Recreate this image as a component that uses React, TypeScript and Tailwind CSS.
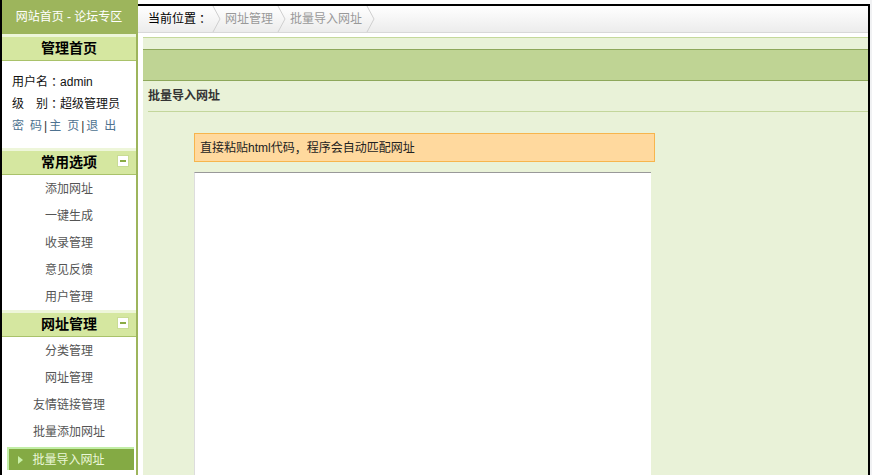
import React from 'react';

const font = { fontFamily: '"Liberation Sans", "Noto Sans CJK SC", sans-serif' };
// full-width punctuation that sits centred in its cell
const colonFont = { fontFamily: '"Noto Sans CJK JP", sans-serif' };

const commonItems = ['添加网址', '一键生成', '收录管理', '意见反馈', '用户管理'];
const urlItems = ['分类管理', '网址管理', '友情链接管理', '批量添加网址', '批量导入网址'];

function Colon() {
  return <span className="leading-none" style={colonFont}>：</span>;
}

function SectionHeader({ title }: { title: string }) {
  return (
    <div className="relative h-[27px] shrink-0 border-t-[3px] border-t-[#eef6da] border-b border-b-[#a9c26a] bg-[#d5e7a0] flex items-center justify-center">
      <span className="text-[14px] font-bold text-black">{title}</span>
    </div>
  );
}

function CollapseHeader({ title }: { title: string }) {
  return (
    <div className="relative h-[27px] shrink-0 border-t-[3px] border-t-[#eef6da] border-b border-b-[#a9c26a] bg-[#d5e7a0] flex items-center justify-center">
      <span className="text-[14px] font-bold text-black">{title}</span>
      {/* collapse toggle */}
      <span className="absolute right-[7px] top-[4px] w-[12px] h-[12px] bg-white border border-[#c9dc95] flex items-center justify-center">
        <span className="block w-[6px] h-[2px] bg-[#8aab45]" />
      </span>
    </div>
  );
}

function NavItem({ label, active }: { label: string; active?: boolean }) {
  if (active) {
    return (
      <div className="h-[27px] shrink-0 pl-[5px] pr-[2px] py-[2px]">
        <div className="relative h-full bg-[#84aa44] border-t-2 border-l-2 border-[#c2eea6] flex items-center justify-center">
          <svg className="absolute left-[9px] top-[7px]" width="5" height="8" viewBox="0 0 5 8">
            <path d="M0 0 L5 4 L0 8 Z" fill="#c8f0a8" />
          </svg>
          <span className="pr-[6px] text-[12px] text-[#eaf7d8]">{label}</span>
        </div>
      </div>
    );
  }
  return (
    <div className="h-[27px] shrink-0 flex items-center justify-center text-[12px] text-[#555]">{label}</div>
  );
}

function Chevron() {
  return (
    <svg width="9" height="26" viewBox="0 0 9 26" className="mx-[4px] shrink-0">
      <polyline points="1,0 8,13 1,26" fill="none" stroke="#cfcfcf" strokeWidth="1" />
    </svg>
  );
}

export default function App() {
  return (
    <div className="w-[872px] h-[475px] flex overflow-hidden bg-[#f0f1f3]" style={font}>
      {/* left menu */}
      <aside className="w-[138px] shrink-0 h-full bg-white border-l-2 border-l-black border-r-2 border-r-[#9db55c] flex flex-col">
        <div className="h-[34px] shrink-0 bg-[#9db55c] flex items-center justify-center text-[12px] text-white">
          网站首页 - 论坛专区
        </div>
        <SectionHeader title="管理首页" />
        <div className="h-[87px] shrink-0 pt-[10px] pl-[10px] text-[12px] text-[#111]">
          <div className="h-[22px] flex items-center">用户名<Colon />admin</div>
          <div className="h-[22px] flex items-center">级<span className="inline-block w-[12px]" />别<Colon />超级管理员</div>
          <div className="h-[22px] flex items-center text-[#4d7290]">
            <span className="mr-[6px]">密</span>码<span className="mx-[2px] text-[#333]">|</span>
            <span className="mr-[6px]">主</span>页<span className="mx-[2px] text-[#333]">|</span>
            <span className="mr-[6px]">退</span>出
          </div>
        </div>
        <CollapseHeader title="常用选项" />
        {commonItems.map(item => (
          <NavItem key={item} label={item} />
        ))}
        <CollapseHeader title="网址管理" />
        {urlItems.map(item => (
          <NavItem key={item} label={item} active={item === '批量导入网址'} />
        ))}
      </aside>

      {/* main area */}
      <main className="flex-1 h-full mr-[2px] pt-[4px] bg-white flex flex-col">
        <div className="flex-1 flex flex-col border-t-2 border-t-black border-r-2 border-r-black min-h-0">
          <div className="h-[27px] shrink-0 border-b border-[#d8d8d8] bg-gradient-to-b from-white to-[#ececec] flex items-center pl-[10px] text-[12px]">
            <span className="flex items-center text-black">当前位置<Colon /></span>
            <Chevron />
            <span className="text-[#999]">网址管理</span>
            <Chevron />
            <span className="text-[#999]">批量导入网址</span>
            <Chevron />
          </div>

          <div className="flex-1 mt-[4px] ml-[5px] bg-[#e9f2d8] border-t border-t-[#c5d99b] flex flex-col min-h-0">
            <div className="mt-[11px] h-[32px] shrink-0 bg-[#bfd494] border-y border-[#8ea85b]" />
            <div className="h-[30px] shrink-0 flex items-center pl-[5px] text-[12px] font-bold text-[#333]">
              批量导入网址
            </div>
            <div className="ml-[5px] border-t border-[#c3d69b]" />

            <div className="mt-[21px] ml-[51px] w-[461px] h-[29px] shrink-0 bg-[#ffd99e] border border-[#f7b54d] flex items-center pl-[5px] text-[12px] text-[#222]">
              直接粘贴html代码<span className="leading-none" style={colonFont}>，</span>程序会自动匹配网址
            </div>

            <textarea
              className="mt-[10px] ml-[51px] w-[457px] flex-1 bg-white border-t border-t-[#999] border-l border-l-[#ddd] resize-none outline-none"
              defaultValue=""
            />
          </div>
        </div>
      </main>
    </div>
  );
}
